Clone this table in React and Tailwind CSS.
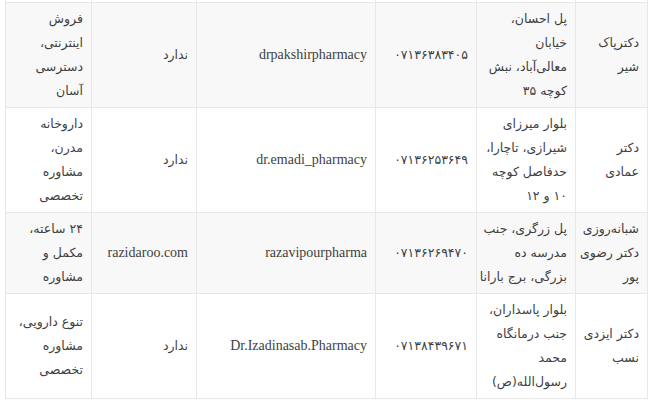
const rows = [
  {
    name: ["دکترپاک", "شیر"],
    address: ["پل احسان،", "خیابان", "معالی‌آباد، نبش", "کوچه ۳۵"],
    phone: "۰۷۱۳۶۳۸۳۴۰۵",
    insta: "drpakshirpharmacy",
    site: "ندارد",
    features: ["فروش", "اینترنتی،", "دسترسی", "آسان"],
    gray: true,
  },
  {
    name: ["دکتر", "عمادی"],
    address: ["بلوار میرزای", "شیرازی، تاچارا،", "حدفاصل کوچه", "۱۰ و ۱۲"],
    phone: "۰۷۱۳۶۲۵۳۶۴۹",
    insta: "dr.emadi_pharmacy",
    site: "ندارد",
    features: ["داروخانه", "مدرن،", "مشاوره", "تخصصی"],
  },
  {
    name: ["شبانه‌روزی", "دکتر رضوی", "پور"],
    address: ["پل زرگری، جنب", "مدرسه ده", "بزرگی، برج بارانا"],
    phone: "۰۷۱۳۶۲۶۹۴۷۰",
    insta: "razavipourpharma",
    site: "razidaroo.com",
    features: ["۲۴ ساعته،", "مکمل و", "مشاوره"],
    gray: true,
  },
  {
    name: ["دکتر ایزدی", "نسب"],
    address: ["بلوار پاسداران،", "جنب درمانگاه", "محمد", "رسول‌الله(ص)"],
    phone: "۰۷۱۳۸۴۳۹۶۷۱",
    insta: "Dr.Izadinasab.Pharmacy",
    site: "ندارد",
    features: ["تنوع دارویی،", "مشاوره", "تخصصی"],
  },
]

const fa = "font-['DejaVu_Sans',sans-serif] text-[12.5px]"
const en = "font-['Liberation_Serif',serif] text-[14px]"

function Lines({ items }) {
  return items.map((t, i) => (
    <div key={i} className="whitespace-nowrap">
      {t}
    </div>
  ))
}

function isLatin(s) {
  return /^[A-Za-z]/.test(s)
}

export default function App() {
  return (
    <div className="w-[648px] h-[402px] overflow-hidden bg-white pl-[5px]">
      <table
        dir="rtl"
        className="table-fixed border-collapse w-[642px] text-[#3f3f3f] leading-[24px]"
      >
        <colgroup>
          <col className="w-[72px]" />
          <col className="w-[99px]" />
          <col className="w-[101px]" />
          <col className="w-[179px]" />
          <col className="w-[105px]" />
          <col className="w-[86px]" />
        </colgroup>
        <tbody>
          <tr className="h-[2px]">
            {[0, 1, 2, 3, 4, 5].map((i) => (
              <td key={i} className="p-0 border-x border-[#e8e8e8]" />
            ))}
          </tr>
          {rows.map((r, i) => (
            <tr key={i} className={r.gray ? "bg-[#f8f8f8]" : "bg-white"}>
              <td className={`border border-[#e8e8e8] px-[8px] py-[4px] align-middle text-right ${fa}`}>
                <Lines items={r.name} />
              </td>
              <td className={`border border-[#e8e8e8] px-[8px] py-[4px] align-middle text-right ${fa}`}>
                <Lines items={r.address} />
              </td>
              <td className={`border border-[#e8e8e8] px-[8px] py-[4px] align-middle text-right whitespace-nowrap tracking-[0.6px] ${fa}`}>
                {r.phone}
              </td>
              <td className={`border border-[#e8e8e8] px-[8px] py-[4px] align-middle text-right whitespace-nowrap ${en}`}>
                <span dir="ltr">{r.insta}</span>
              </td>
              <td className={`border border-[#e8e8e8] px-[8px] py-[4px] align-middle text-right whitespace-nowrap ${isLatin(r.site) ? en : fa}`}>
                <span dir="ltr">{r.site}</span>
              </td>
              <td className={`border border-[#e8e8e8] px-[8px] py-[4px] align-middle text-right ${fa}`}>
                <Lines items={r.features} />
              </td>
            </tr>
          ))}
        </tbody>
      </table>
    </div>
  )
}
